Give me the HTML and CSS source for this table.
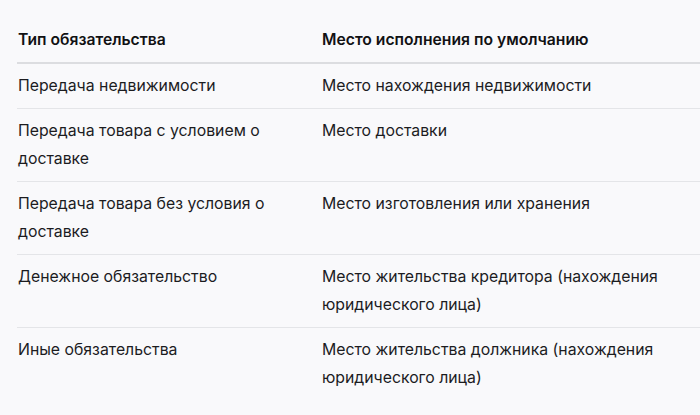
FILE: index.html
```html
<!DOCTYPE html>
<html lang="ru">
<head>
<meta charset="utf-8">
<link rel="stylesheet" href="styles.css">
</head>
<body>
<div class="wrap">
  <table class="tbl">
    <colgroup>
      <col class="c1">
      <col class="c2">
    </colgroup>
    <thead>
      <tr>
        <th>Тип обязательства</th>
        <th>Место исполнения по умолчанию</th>
      </tr>
    </thead>
    <tbody>
      <tr>
        <td>Передача недвижимости</td>
        <td>Место нахождения недвижимости</td>
      </tr>
      <tr>
        <td>Передача товара с условием о доставке</td>
        <td>Место доставки</td>
      </tr>
      <tr>
        <td>Передача товара без условия о доставке</td>
        <td>Место изготовления или хранения</td>
      </tr>
      <tr>
        <td>Денежное обязательство</td>
        <td>Место жительства кредитора (нахождения юридического лица)</td>
      </tr>
      <tr>
        <td>Иные обязательства</td>
        <td>Место жительства должника (нахождения юридического лица)</td>
      </tr>
    </tbody>
  </table>
</div>
</body>
</html>
```

FILE: styles.css
```css
html, body {
  margin: 0;
  padding: 0;
  background: #f9f9fb;
}
body {
  font-family: Inter, "Noto Sans", sans-serif;
  font-size: 15.8px;
  color: #1c1c1f;
}
.wrap {
  padding: 18px 0 0 17px;
}
.tbl {
  width: 683px;
  border-collapse: collapse;
  table-layout: fixed;
}
.c1 { width: 304px; }
.tbl th,
.tbl td {
  text-align: left;
  vertical-align: top;
  padding: 8px 24px 8px 1px;
  line-height: 28px;
}
.tbl th {
  font-size: 15.7px;
  font-weight: 600;
  color: #111113;
  border-bottom: 2px solid #dcdde0;
}
.tbl td {
  font-weight: 400;
  border-bottom: 1px solid #e4e5e8;
}
.tbl tbody tr:last-child td {
  border-bottom: none;
}
```
